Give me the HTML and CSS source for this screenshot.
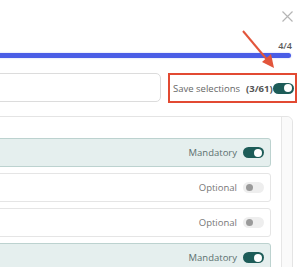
FILE: index.html
```html
<!DOCTYPE html>
<html lang="en">
<head>
    <meta charset="UTF-8">
    <meta name="viewport" content="width=device-width, initial-scale=1.0">
    <title>Select fields</title>
    <link rel="stylesheet" href="styles.css">
</head>
<body>
    <div class="modal">
        <div class="top">
            <svg class="close" width="11" height="11" viewBox="0 0 11 11">
                <path d="M0.5 0.5 L10.5 10.5 M10.5 0.5 L0.5 10.5" stroke="#b5b5b5" stroke-width="1.2" fill="none"/>
            </svg>
        </div>

        <div class="progress">
            <span class="step">4/4</span>
            <div class="bar"></div>
        </div>

        <div class="controls">
            <div class="search"></div>
            <div class="save-box">
                <span class="save-label">Save selections</span>
                <span class="save-count">(3/61)</span>
                <span class="toggle on"></span>
            </div>
        </div>

        <div class="panel">
            <div class="list">
                <div class="row mandatory">
                    <span class="row-label">Mandatory</span>
                    <span class="toggle on"></span>
                </div>
                <div class="row">
                    <span class="row-label">Optional</span>
                    <span class="toggle"></span>
                </div>
                <div class="row">
                    <span class="row-label">Optional</span>
                    <span class="toggle"></span>
                </div>
                <div class="row mandatory">
                    <span class="row-label">Mandatory</span>
                    <span class="toggle on"></span>
                </div>
            </div>
            <div class="track"></div>
        </div>

        <!-- annotation arrow -->
        <svg class="arrow" width="50" height="50" viewBox="0 0 50 50">
            <line x1="3" y1="1" x2="29" y2="32" stroke="#e2553b" stroke-width="2"/>
            <polygon points="34,38 22,32 31,24" fill="#e2553b"/>
        </svg>
    </div>
</body>
</html>
```

FILE: styles.css
```css
body, html {
    margin: 0;
    padding: 0;
    background-color: #fff;
    font-family: "Open Sans", Arial, sans-serif;
    overflow: hidden;
}

.modal {
    position: relative;
    height: 267px;
    overflow: hidden;
}

.top {
    display: flex;
    justify-content: flex-end;
    padding: 11px 11px 0 0;
    height: 11px;
}

.progress {
    display: flex;
    flex-direction: column;
    align-items: flex-end;
    margin-top: 18px;
}

.step {
    font-size: 9px;
    line-height: 11px;
    font-weight: 600;
    color: #5a5a5a;
    margin-right: 12px;
}

.bar {
    align-self: stretch;
    height: 5px;
    margin: 2px 13px 0 -10px;
    border-radius: 3px;
    background-color: #4a5de6;
    box-shadow: 0 0 2px rgba(74, 93, 230, 0.35);
}

.controls {
    display: flex;
    gap: 7px;
    margin: 15px 7px 0 -20px;
    height: 30px;
}

.search {
    flex: 1;
    height: 27px;
    border: 1px solid #dcdcdc;
    border-radius: 5px;
}

.save-box {
    display: flex;
    align-items: center;
    width: 122px;
    padding-left: 3px;
    border: 2px solid #e24a32;
    font-size: 9.5px;
    color: #666;
}

.save-count {
    margin-left: 6px;
    font-weight: 700;
    color: #555;
}

.panel {
    display: flex;
    margin: 13px 11px 0 -20px;
    height: 170px;
    border: 1px solid #e4e4e4;
    border-radius: 6px;
}

.list {
    flex: 1;
    display: flex;
    flex-direction: column;
    gap: 6px;
    padding: 21px 10px 0 0;
}

.track {
    width: 10px;
    border-left: 1px solid #e6e6e6;
    background-color: #fafafa;
    border-radius: 0 6px 6px 0;
}

.row {
    display: flex;
    flex-shrink: 0;
    align-items: center;
    justify-content: flex-end;
    gap: 6px;
    height: 27px;
    padding-right: 6px;
    border: 1px solid #e5e5e5;
    border-radius: 3px;
    background-color: #fff;
}

.row.mandatory {
    background-color: #e5efee;
    border-color: #bcd2cf;
}

.row-label {
    font-size: 9.5px;
    color: #777;
}

.mandatory .row-label {
    color: #5c706e;
}

.toggle {
    position: relative;
    width: 21px;
    height: 11px;
    border-radius: 6px;
    background-color: #eeeeee;
}

.toggle::after {
    content: "";
    position: absolute;
    top: 2px;
    left: 3px;
    width: 7px;
    height: 7px;
    border-radius: 50%;
    background-color: #9a9a9a;
}

.toggle.on {
    background-color: #1d5c58;
}

.toggle.on::after {
    top: 1.5px;
    left: 11px;
    width: 8px;
    height: 8px;
    background-color: #fff;
}

.save-box .toggle {
    margin-left: auto;
    margin-right: 1px;
}

.arrow {
    position: absolute;
    left: 240px;
    top: 30px;
}
```
